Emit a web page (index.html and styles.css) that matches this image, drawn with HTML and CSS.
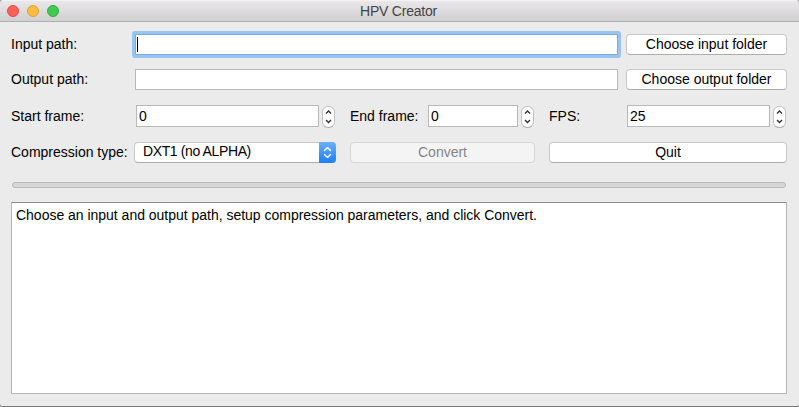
FILE: index.html
```
<!DOCTYPE html>
<html lang="en">
<head>
<meta charset="utf-8">
<title>HPV Creator</title>
<link rel="stylesheet" href="styles.css">
</head>
<body>
<div class="window">
  <header class="titlebar">
    <div class="lights"><i class="light close"></i><i class="light minimize"></i><i class="light zoom"></i></div>
    <span class="title">HPV Creator</span>
  </header>
  <main class="content">
    <div class="row row-input">
      <span class="label first">Input path:</span>
      <div class="field path focused"><i class="caret"></i></div>
      <div class="button side">Choose input folder</div>
    </div>
    <div class="row row-output">
      <span class="label first">Output path:</span>
      <div class="field path"></div>
      <div class="button side">Choose output folder</div>
    </div>
    <div class="row row-frames">
      <span class="label start">Start frame:</span>
      <div class="field num num-start">0</div>
      <div class="stepper"><svg viewBox="0 0 13 22"><path d="M4 7.500 6.500 5 9 7.500M4 14l2.500 2.500L9 14"/></svg></div>
      <span class="label end">End frame:</span>
      <div class="field num num-end">0</div>
      <div class="stepper"><svg viewBox="0 0 13 22"><path d="M4 7.500 6.500 5 9 7.500M4 14l2.500 2.500L9 14"/></svg></div>
      <span class="label fps">FPS:</span>
      <div class="field num num-fps">25</div>
      <div class="stepper"><svg viewBox="0 0 13 22"><path d="M4 7.500 6.500 5 9 7.500M4 14l2.500 2.500L9 14"/></svg></div>
    </div>
    <div class="row row-actions">
      <span class="label comp">Compression type:</span>
      <div class="select"><span>DXT1 (no ALPHA)</span><div class="arrows"><svg viewBox="0 0 17 21"><path d="M5.500 8.500 8.500 5.500l3 3M5.500 12.500l3 3 3-3"/></svg></div></div>
      <div class="button convert">Convert</div>
      <div class="button quit">Quit</div>
    </div>
    <div class="progress"></div>
    <div class="log">Choose an input and output path, setup compression parameters, and click Convert.</div>
  </main>
</div>
</body>
</html>
```

FILE: styles.css
```
* { box-sizing: border-box; }
body { margin: 0; background: #a5a5a5; font: 14px/16px "Liberation Sans", Arial, sans-serif; color: #000; }
.window { height: 407px; background: #ebebeb; border-bottom: 1px solid #777; border-radius: 4px 4px 3px 3px; overflow: hidden; }
.titlebar { height: 22px; display: grid; grid-template-columns: 1fr auto 1fr; align-items: center; background: linear-gradient(#e9e7e9, #d1d0d1); border-top: 1px solid #f5f4f5; border-bottom: 1px solid #b1b0b1; }
.lights { display: flex; gap: 8px; padding-left: 7px; }
.light { width: 12px; height: 12px; border-radius: 50%; border: 1px solid; }
.close { background: #fc605b; border-color: #e24a46; }
.minimize { background: #fdbc40; border-color: #dfa032; }
.zoom { background: #41c950; border-color: #2eaf3a; }
.title { color: #454345; letter-spacing: -.23px; line-height: 20px; margin-left: -2px; }
.content { padding: 12px 12px 0 11px; }
.row { display: flex; white-space: nowrap; }
.row > * { flex: none; }
.row-input { height: 35px; }
.row-output { height: 36px; }
.row-frames { height: 37px; }
.row-actions { height: 40px; }
.label { line-height: 21px; }
.first { width: 124px; }
.start { width: 125px; }
.end { width: 78px; margin-left: 15px; }
.fps { width: 78px; margin-left: 15px; }
.row-frames .label { line-height: 23px; }
.comp { width: 123px; }
.field { height: 21px; background: #fff; border: 1px solid #b8b8b8; }
.path { width: 483px; margin-right: 8px; }
.focused { border-color: #7aaadf; box-shadow: 0 0 0 3px #98c4f1; border-radius: 1px; padding: 2px 0 0 1px; }
.caret { display: block; width: 1px; height: 15px; background: #000; }
.num { height: 22px; line-height: 21px; padding-left: 2px; margin-right: 3px; }
.num-start { width: 183px; }
.num-end { width: 90px; }
.num-fps { width: 143px; }
.button { height: 21px; line-height: 19px; border: 1px solid #c8c8c8; border-bottom-color: #acacac; border-radius: 4px; background: #fff; text-align: center; }
.side { width: 161px; }
.stepper { width: 13px; height: 22px; margin-top: 1px; border: 1px solid #c3c3c3; border-bottom-color: #adadad; border-radius: 6px; background: #fff; }
.stepper svg { display: block; width: 13px; height: 22px; margin: -1px 0 0 -1px; fill: none; stroke: #333; stroke-width: 1.400; }
.select { display: flex; justify-content: space-between; width: 202px; height: 21px; line-height: 17px; padding-left: 8px; letter-spacing: -.38px; background: #fff; border: 1px solid #c8c8c8; border-bottom-color: #acacac; border-radius: 4px; }
.arrows { width: 17px; height: 21px; margin: -1px -1px 0 0; border-radius: 0 4px 4px 0; background: linear-gradient(#6bb0f8, #1b7ffb); }
.arrows svg { display: block; width: 17px; height: 21px; fill: none; stroke: #fff; stroke-width: 1.500; stroke-linecap: round; stroke-linejoin: round; }
.convert { width: 185px; margin-left: 14px; color: #858585; background: #f4f4f4; border-color: #d6d6d6; }
.quit { width: 238px; margin-left: 14px; }
.progress { height: 6px; margin: 0 1px; background: #d7d7d7; border: 1px solid #bababa; border-radius: 3px; }
.log { height: 192px; margin-top: 14px; padding: 4px; letter-spacing: -.015px; background: #fff; border: 1px solid #b5b5b5; border-top-color: #8e8e8e; white-space: nowrap; }
```
